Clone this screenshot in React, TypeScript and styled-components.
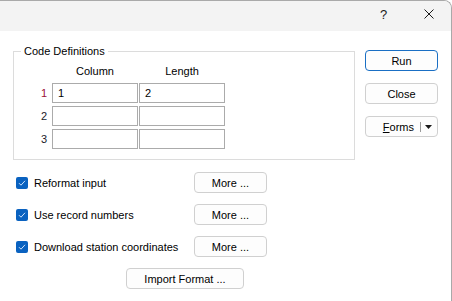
import React from "react";
import styled, { createGlobalStyle } from "styled-components";

const GlobalStyle = createGlobalStyle`
  html, body {
    margin: 0;
    padding: 0;
    background: #ffffff;
  }
  body {
    font-family: "Liberation Sans", Arial, sans-serif;
    font-size: 11px;
    color: #000000;
  }
`;

const Window = styled.div`
  width: 452px;
  height: 301px;
  box-sizing: border-box;
  border-top: 1px solid #a9a9a9;
  border-right: 1px solid #a9a9a9;
  border-top-right-radius: 8px;
  background: #ffffff;
  overflow: hidden;
  display: flex;
  flex-direction: column;
`;

const TitleBar = styled.div`
  height: 30px;
  flex: none;
  background: #f3f3f3;
  display: flex;
  justify-content: flex-end;
  align-items: stretch;
`;

const TitleButton = styled.div`
  width: 45px;
  padding-bottom: 4px;
  display: flex;
  align-items: center;
  justify-content: center;
  font-family: "Liberation Sans", Arial, sans-serif;
  font-size: 13px;
  color: #1a1a1a;
`;

const Body = styled.div`
  padding-left: 13px;
  display: flex;
  flex-direction: column;
`;

const TopRow = styled.div`
  display: flex;
  align-items: flex-start;
  gap: 10px;
  padding-top: 14px;
`;

const Group = styled.fieldset`
  width: 342px;
  box-sizing: border-box;
  margin: 0;
  padding: 0 0 10px 0;
  border: 1px solid #dcdcdc;
  min-width: 0;
`;

const Legend = styled.legend`
  margin-left: 7px;
  padding: 0 3px;
  line-height: 13px;
  font-size: 11px;
`;

const Grid = styled.div`
  margin-top: 2px;
  display: grid;
  grid-template-columns: 37px 86px 86px;
  grid-auto-rows: 20px;
  column-gap: 1px;
  row-gap: 3px;
`;

const HeadCell = styled.div`
  height: 18px;
  line-height: 22px;
  text-align: center;
`;

const RowLabel = styled.div<{ $active?: boolean }>`
  line-height: 20px;
  text-align: right;
  padding-right: 4px;
  color: ${(p) => (p.$active ? "#9b1035" : "#1a1a2a")};
`;

const Cell = styled.div`
  box-sizing: border-box;
  border: 1px solid #ababab;
  padding-left: 5px;
  line-height: 18px;
`;

const ButtonColumn = styled.div`
  margin-top: 5px;
  display: flex;
  flex-direction: column;
  gap: 12px;
`;

const Button = styled.button<{ $primary?: boolean; $width?: number }>`
  width: ${(p) => p.$width ?? 73}px;
  height: 21px;
  box-sizing: border-box;
  padding: 0;
  border: 1px solid ${(p) => (p.$primary ? "#1a6fc4" : "#d0d0d0")};
  border-radius: 4px;
  background: #fdfdfd;
  font-family: "Liberation Sans", Arial, sans-serif;
  font-size: 11px;
  color: #000000;
  display: flex;
  align-items: center;
  justify-content: center;
`;

const SplitButton = styled(Button)`
  justify-content: flex-end;
  padding-right: 5px;
`;

const SplitDivider = styled.span`
  width: 1px;
  height: 10px;
  background: #9a9a9a;
  margin: 0 4px 0 6px;
`;

const Options = styled.div`
  margin-top: 12px;
  display: flex;
  flex-direction: column;
  gap: 11px;
`;

const OptionRow = styled.div`
  display: flex;
  align-items: center;
  padding-left: 3px;
`;

const CheckLabel = styled.label`
  width: 178px;
  display: flex;
  align-items: center;
  gap: 6px;
`;

const Box = styled.span`
  width: 12px;
  height: 12px;
  border-radius: 2px;
  background: #0a62c0;
  display: flex;
  align-items: center;
  justify-content: center;
`;

const ImportRow = styled.div`
  padding-left: 113px;
`;

function CheckMark() {
  return (
    <Box>
      <svg width="8" height="8" viewBox="0 0 8 8">
        <path d="M1 4.2 L3 6.2 L7 1.8" fill="none" stroke="#cfe3fb" strokeWidth="1" />
      </svg>
    </Box>
  );
}

function Option({ label }: { label: string }) {
  return (
    <OptionRow>
      <CheckLabel>
        <CheckMark />
        <span>{label}</span>
      </CheckLabel>
      <Button>More ...</Button>
    </OptionRow>
  );
}

const rows = [
  { n: "1", col: "1", len: "2" },
  { n: "2", col: "", len: "" },
  { n: "3", col: "", len: "" },
];

export default function App() {
  return (
    <>
      <GlobalStyle />
      <Window>
        <TitleBar>
          <TitleButton>?</TitleButton>
          <TitleButton>
            <svg width="10" height="10" viewBox="0 0 10 10">
              <path d="M0.5 0.5 L9.5 9.5 M9.5 0.5 L0.5 9.5" stroke="#1a1a1a" strokeWidth="1" />
            </svg>
          </TitleButton>
        </TitleBar>
        <Body>
          <TopRow>
            <Group>
              <Legend>Code Definitions</Legend>
              <Grid>
                <HeadCell />
                <HeadCell>Column</HeadCell>
                <HeadCell>Length</HeadCell>
                {rows.map((r, i) => (
                  <React.Fragment key={r.n}>
                    <RowLabel $active={i === 0}>{r.n}</RowLabel>
                    <Cell>{r.col}</Cell>
                    <Cell>{r.len}</Cell>
                  </React.Fragment>
                ))}
              </Grid>
            </Group>
            <ButtonColumn>
              <Button $primary>Run</Button>
              <Button>Close</Button>
              <SplitButton>
                <span>
                  <u>F</u>orms
                </span>
                <SplitDivider />
                <svg width="7" height="4" viewBox="0 0 7 4">
                  <path d="M0 0 L7 0 L3.5 4 Z" fill="#1a1a1a" />
                </svg>
              </SplitButton>
            </ButtonColumn>
          </TopRow>
          <Options>
            <Option label="Reformat input" />
            <Option label="Use record numbers" />
            <Option label="Download station coordinates" />
            <ImportRow>
              <Button $width={118}>Import Format ...</Button>
            </ImportRow>
          </Options>
        </Body>
      </Window>
    </>
  );
}
